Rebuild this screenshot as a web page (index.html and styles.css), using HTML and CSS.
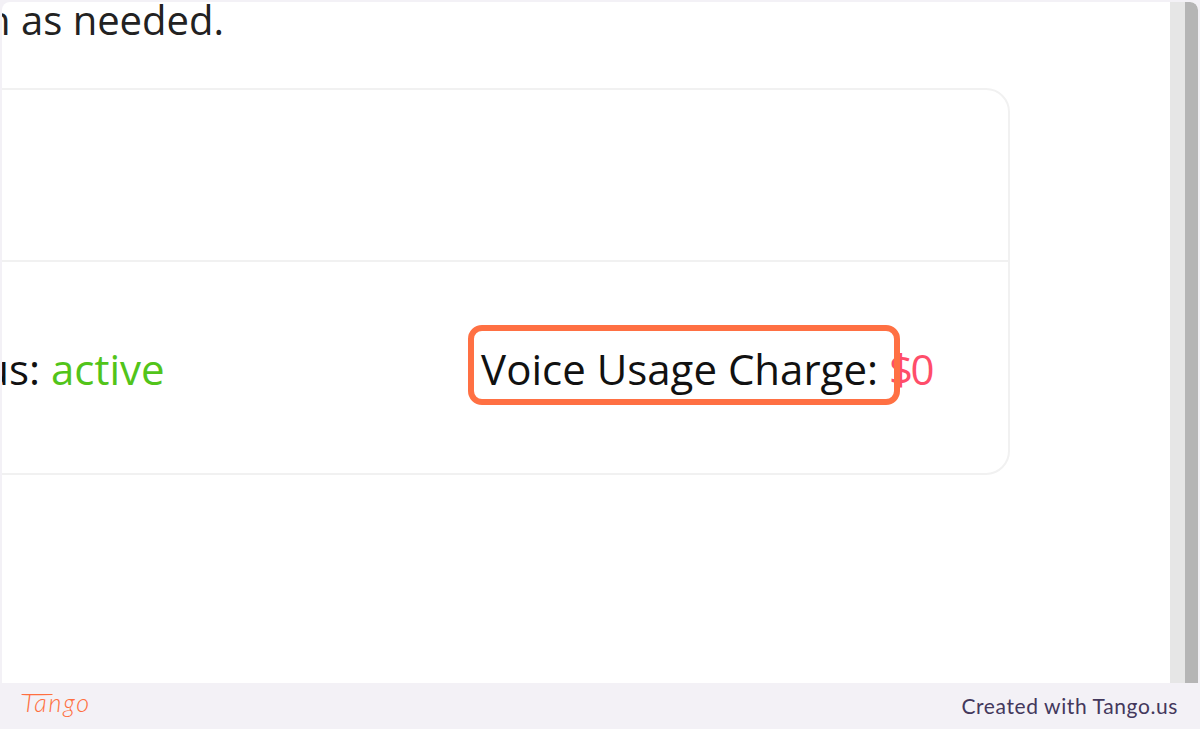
FILE: index.html
```html
<!DOCTYPE html>
<html lang="en">
<head>
    <meta charset="UTF-8">
    <meta name="viewport" content="width=device-width, initial-scale=1.0">
    <title>Voice Usage Charge</title>
    <link rel="stylesheet" href="styles.css">
</head>
<body>

    <div class="shot">
        <div class="page">
            <div class="content">
                <p class="intro">Add a plan as needed.</p>
                <div class="card">
                    <div class="card-top"></div>
                    <div class="card-row">
                        <div class="status">Status: <span class="active">active</span></div>
                        <div class="charge">
                            <span class="charge-label">Voice Usage Charge:</span>
                            <span class="amount">$0</span>
                            <div class="highlight"></div>
                        </div>
                    </div>
                </div>
            </div>
            <div class="scrollbar"><div class="thumb"></div></div>
        </div>
        <div class="footer">
            <div class="logo">
                <svg class="logo-bar" width="32" height="4" viewBox="0 0 32 4"><path d="M1 1.5C10 2 20 1.5 31 1.5" fill="none" stroke="#ff6f40" stroke-width="1.2" stroke-linecap="round"/></svg>
                <span class="logo-text">Tango</span>
            </div>
            <div class="credit">Created with Tango.us</div>
        </div>
    </div>

</body>
</html>
```

FILE: styles.css
```css
* { box-sizing: border-box; }
html, body { margin: 0; height: 100%; }
body { background: #f3f1f6; font-family: "Open Sans", sans-serif; overflow: hidden; }

.shot { height: 729px; display: flex; flex-direction: column; }

.page {
    height: 681px;
    margin: 2px 2px 0 2px;
    background: #fff;
    border-radius: 8px 8px 0 0;
    display: flex;
    overflow: hidden;
}
.content { width: 1168px; overflow: hidden; }
.intro {
    margin: -7px 0 0 -400px;
    width: 622px;
    font-size: 40px;
    line-height: 50px;
    color: #222;
    text-align: right;
    white-space: nowrap;
}

.card {
    width: 1300px;
    height: 387px;
    margin: 43px 0 0 -292px;
    border: 2px solid #f1f1f1;
    border-radius: 24px;
}
.card-top { height: 172px; border-bottom: 2px solid #f1f1f1; }
.card-row {
    height: 211px;
    padding: 1px 76px 0 0;
    display: flex;
    align-items: center;
    justify-content: space-between;
    font-size: 42px;
    color: #111;
}
.status { margin-left: 195px; white-space: nowrap; }
.active { color: #52c41a; }

.charge { position: relative; white-space: nowrap; }
.amount { color: #ff4d6a; letter-spacing: -2.5px; }
.highlight {
    position: absolute;
    left: -13px;
    top: -15px;
    width: 432px;
    height: 80px;
    border: 6px solid #ff7043;
    border-radius: 14px;
}

.scrollbar { width: 28px; background: #e6e6e6; padding-left: 15px; }
.thumb { height: 100%; background: #b5b5b5; border-radius: 0 8px 0 0; }

.footer {
    height: 46px;
    padding: 0 22px 0 20px;
    display: flex;
    align-items: center;
    justify-content: space-between;
}
.logo { position: relative; width: 70px; height: 46px; }
.logo-bar { position: absolute; left: 1px; top: 10px; }
.logo-text {
    position: absolute;
    left: 2px;
    top: 1px;
    font-family: "Lato", sans-serif;
    font-style: italic;
    font-weight: 300;
    font-size: 25px;
    line-height: 36px;
    letter-spacing: 1.8px;
    color: #ff6f40;
}
.credit {
    font-family: "Lato", sans-serif;
    font-size: 21px;
    letter-spacing: 0.6px;
    color: #43385c;
    margin-top: -2px;
}
```
